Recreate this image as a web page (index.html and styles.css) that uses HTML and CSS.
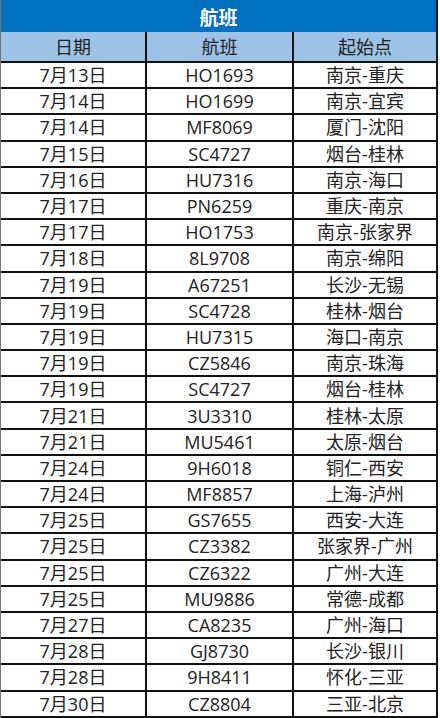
FILE: index.html
```html
<!DOCTYPE html>
<html lang="zh">
<head>
<meta charset="utf-8">
<title>航班</title>
<link rel="stylesheet" href="styles.css">
</head>
<body>
<div class="sheet">
  <div class="title">航班</div>
  <div class="row head"><div class="cell">日期</div><div class="cell">航班</div><div class="cell">起始点</div></div>
  <div class="row"><div class="cell">7月13日</div><div class="cell">HO1693</div><div class="cell">南京-重庆</div></div>
  <div class="row"><div class="cell">7月14日</div><div class="cell">HO1699</div><div class="cell">南京-宜宾</div></div>
  <div class="row"><div class="cell">7月14日</div><div class="cell">MF8069</div><div class="cell">厦门-沈阳</div></div>
  <div class="row"><div class="cell">7月15日</div><div class="cell">SC4727</div><div class="cell">烟台-桂林</div></div>
  <div class="row"><div class="cell">7月16日</div><div class="cell">HU7316</div><div class="cell">南京-海口</div></div>
  <div class="row"><div class="cell">7月17日</div><div class="cell">PN6259</div><div class="cell">重庆-南京</div></div>
  <div class="row"><div class="cell">7月17日</div><div class="cell">HO1753</div><div class="cell">南京-张家界</div></div>
  <div class="row"><div class="cell">7月18日</div><div class="cell">8L9708</div><div class="cell">南京-绵阳</div></div>
  <div class="row"><div class="cell">7月19日</div><div class="cell">A67251</div><div class="cell">长沙-无锡</div></div>
  <div class="row"><div class="cell">7月19日</div><div class="cell">SC4728</div><div class="cell">桂林-烟台</div></div>
  <div class="row"><div class="cell">7月19日</div><div class="cell">HU7315</div><div class="cell">海口-南京</div></div>
  <div class="row"><div class="cell">7月19日</div><div class="cell">CZ5846</div><div class="cell">南京-珠海</div></div>
  <div class="row"><div class="cell">7月19日</div><div class="cell">SC4727</div><div class="cell">烟台-桂林</div></div>
  <div class="row"><div class="cell">7月21日</div><div class="cell">3U3310</div><div class="cell">桂林-太原</div></div>
  <div class="row"><div class="cell">7月21日</div><div class="cell">MU5461</div><div class="cell">太原-烟台</div></div>
  <div class="row"><div class="cell">7月24日</div><div class="cell">9H6018</div><div class="cell">铜仁-西安</div></div>
  <div class="row"><div class="cell">7月24日</div><div class="cell">MF8857</div><div class="cell">上海-泸州</div></div>
  <div class="row"><div class="cell">7月25日</div><div class="cell">GS7655</div><div class="cell">西安-大连</div></div>
  <div class="row"><div class="cell">7月25日</div><div class="cell">CZ3382</div><div class="cell">张家界-广州</div></div>
  <div class="row"><div class="cell">7月25日</div><div class="cell">CZ6322</div><div class="cell">广州-大连</div></div>
  <div class="row"><div class="cell">7月25日</div><div class="cell">MU9886</div><div class="cell">常德-成都</div></div>
  <div class="row"><div class="cell">7月27日</div><div class="cell">CA8235</div><div class="cell">广州-海口</div></div>
  <div class="row"><div class="cell">7月28日</div><div class="cell">GJ8730</div><div class="cell">长沙-银川</div></div>
  <div class="row"><div class="cell">7月28日</div><div class="cell">9H8411</div><div class="cell">怀化-三亚</div></div>
  <div class="row"><div class="cell">7月30日</div><div class="cell">CZ8804</div><div class="cell">三亚-北京</div></div>
</div>
</body>
</html>
```
FILE: styles.css
```css
html, body {
  margin: 0;
  padding: 0;
  background: #ffffff;
}

body {
  font-family: "Open Sans", "Noto Sans CJK SC", sans-serif;
  color: #222222;
  overflow: hidden;
}

.sheet {
  width: 438px;
  box-sizing: border-box;
  border-left: 1px solid #777777;
  border-right: 2px solid #1a1a1a;
}

.title {
  height: 32px;
  background: #0070c0;
  color: #ffffff;
  font-weight: bold;
  font-size: 19px;
  display: flex;
  align-items: center;
  justify-content: center;
  font-family: "Noto Sans CJK SC", sans-serif;
}

.row {
  display: grid;
  grid-template-columns: 146px 147px 1fr;
  height: 26.2px;
  box-sizing: border-box;
  border-bottom: 2px solid #111111;
}

.row.head {
  height: 31px;
  background: #9dc3e6;
}

.cell {
  display: flex;
  align-items: center;
  justify-content: center;
  font-size: 18px;
  line-height: 1;
  white-space: nowrap;
}

.cell:nth-child(1),
.cell:nth-child(2) {
  border-right: 2px solid #111111;
}
```
